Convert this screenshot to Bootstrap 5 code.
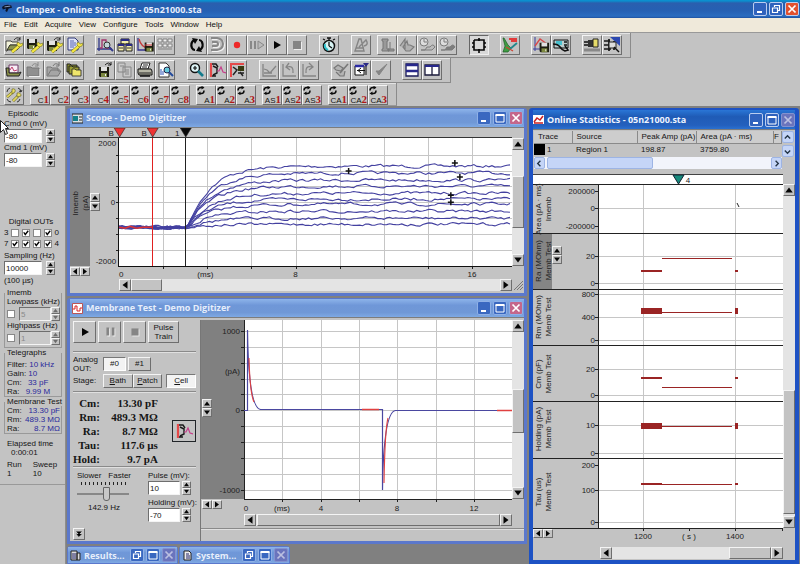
<!DOCTYPE html>
<html lang="en">
<head>
<meta charset="utf-8">
<meta name="viewport" content="width=device-width, initial-scale=1">
<title>Clampex - Online Statistics</title>
<link href="https://cdn.jsdelivr.net/npm/bootstrap@5.3.0/dist/css/bootstrap.min.css" rel="stylesheet">
<style>
:root{--face:#c3c3c3;--ui:"Liberation Sans",Arial,sans-serif;--cap:"Open Sans","Noto Sans",sans-serif}
body{font:8px/10px var(--ui);color:#151515;background:#808080;overflow-x:hidden}
button,input{font:inherit;color:inherit}
svg{display:block}
svg text{font-family:"Liberation Sans",Arial,sans-serif;font-size:8px;fill:#222}
.bevel{background:var(--face);border:1px solid;border-color:#f4f4f4 #6e6e6e #6e6e6e #f4f4f4;border-radius:0}
.sunk{border:1px solid;border-color:#6e6e6e #f4f4f4 #f4f4f4 #6e6e6e}
.btn{--bs-btn-padding-x:0;--bs-btn-padding-y:0;--bs-btn-font-size:8px;--bs-btn-line-height:10px;--bs-btn-border-radius:0;--bs-btn-color:#151515}
.app-title{height:18px;padding:0 1px 0 2px;font:700 9px/17px var(--cap);color:#e6eefc;background:linear-gradient(#0b93d2 0,#0b8ccc 1px,#2a5fae 3px,#2560b3 60%,#2a6cc0 90%,#1d50a0)}
.app-menu{height:15px;padding-left:4px;gap:7px;background:#efe9da;border-bottom:1px solid #999}
.app-menu a{font:8px/13px var(--ui);color:#111;text-decoration:none}
.bars{background:var(--face)}
.strip{height:25px;padding:2px 8px 3px 4px;border-bottom:1px solid #8b8b8b;border-right:1px solid #8b8b8b;box-shadow:inset 0 1px #e3e3e3}
.strip.last{height:23px;border-bottom-color:#999;padding-bottom:1px}
.tool{width:20px;height:20px;flex:none;padding:0}
.tool svg{width:18px;height:18px}
.tool.down{border-color:#666 #eee #eee #666;background:#d8d8d8}
.g12{margin-left:12px}.g11{margin-left:11px}.g6{margin-left:6px}
.cyc{display:flex;flex-direction:column;align-items:flex-start}
.cyc svg{width:8px;height:9px;flex:none}
.cyc span{align-self:flex-end;font:8px/8px var(--ui);height:8px;white-space:nowrap}
.cyc b{font:700 11px/8px "Liberation Serif",serif;color:#b01818}
.wb{gap:2px}
.wt{font:inherit}
.wbtn{width:14px;height:14px;padding:0;border:1px solid #b9cdf0;border-radius:2px;background:#2f62bd}
.wbtn svg{width:12px;height:12px}
.wbtn.x{background:#e2512f}
.soft .wbtn{border-color:#8fb0e6;background:#3a68c0}
.soft .wbtn.x{background:#c4668a}
.dim .wbtn.x{background:#6a74bd;border-color:#8392cf}
.dim .wbtn.x svg{opacity:.55}
.side{width:66px;background:var(--face);border-right:1px solid #8d8d8d;flex:none}
.side label{display:block;white-space:nowrap}
.side-in{padding:3px 3px 0 4px;border-bottom:1px solid #999}
.field{height:14px;border-radius:0;background:#fff;padding:0 1px;min-width:0;line-height:12px}
.field:disabled{background:#c9c9c9;color:#8a8a8a}
.w38{width:38px}.w33{width:32px}
.spin{width:9px;flex:none}
.spin button{display:block;width:9px;height:7px;padding:0}
.spin svg{width:7px;height:5px}
.off button svg{opacity:.45}
.form-check-input[type=checkbox]{width:8px;height:8px;margin:0;border-radius:0;border:1px solid #888;background-color:#fff;flex:none}
.form-check-input:checked[type=checkbox]{background-image:url("data:image/svg+xml,%3csvg xmlns='http://www.w3.org/2000/svg' viewBox='0 0 8 8'%3e%3cpath fill='none' stroke='black' stroke-width='1.8' d='M1 3l2 3 4-5'/%3e%3c/svg%3e")}
.outs{margin:50px 4px 0 0}
.bits{height:11px;padding-right:3px}
.samp{margin-top:2px}
.usec{margin:1px 0 2px}
.grp{border:1px solid #999;border-top:0;padding:0 1px 0 2px}
.grp legend{float:none;font-size:8px;line-height:9px;margin:0;display:flex;align-items:center;gap:1px;width:auto;white-space:nowrap}
.grp legend::after{content:"";height:1px;background:#999;flex:1}
.grp.filt{padding-bottom:2px}
.blue{color:#2a2a9c}
.rd{line-height:9px;white-space:nowrap}
.rd.first{padding-top:3px}
.ela{padding:5px 0 6px 3px;line-height:9px}
.runs{gap:11px;margin-top:3px}
.mdi{padding:2px 1px 1px 1px;gap:2px}
.stackcol{gap:2px}
.win{border:3px solid #5b78cc;border-top-width:1px;border-radius:3px 3px 0 0;background:var(--face)}
.cap{height:19px;padding:0 1px 0 2px;gap:3px;font:700 9px/18px var(--cap);color:#e6eefb;background:linear-gradient(#8db4ea,#6f97d8 35%,#7098d6 75%,#7ea9e4);border-bottom:1px solid #7c7c7c;white-space:nowrap}
.cap>svg{width:11px;height:11px}
.win.on{border:4px solid #1d52c4;border-top-width:2px}
.on>.cap{height:20px;padding:0;background:linear-gradient(#2a76d6,#1f5bb6 35%,#2460bd 80%,#2a70d0);color:#eef4ff}
.stats{width:270px;flex:none}
.vbar{width:12px;background:#e4e4e4;flex:none}
.hbar{height:12px;background:#e4e4e4}
.arr{width:12px;height:12px;flex:none;padding:0}
.arr svg{width:10px;height:8px}
.fan{position:absolute;z-index:2;display:flex}
.fan button{width:10px;height:9px;padding:0}
.fan svg{width:8px;height:7px}
#fa{left:20px;top:65px}#fb{left:0;top:139px}#fc{left:1px;top:79px}#fd{left:1px;top:180px}#fe{left:19px;top:72px}#ff{left:0;top:355px}
.vb1{margin:10px 0 13px}.hs1{margin-left:49px;height:14px}
.vb2{margin-bottom:15px}.hs2{margin:0 12px 2px 43px}
.vb3{margin:10px 0 14px}.hs3{margin:5px 12px 0 67px}
.mbody{padding-top:2px}
.mcol{border-left:1px solid #777}
.panel-l{width:130px;flex:none;padding:1px 4px 1px 3px}
.big{width:23px;height:22px}
.big.wide{width:31px}
.row-btns{gap:2px}
.rule{height:1px;background:#8a8a8a;box-shadow:0 1px #e0e0e0}
.m1{margin:8px 0 3px}.m3{margin-top:1px}.m4{margin:3px 0 4px}.m5{margin:0 0 4px}
.lab{width:30px;flex:none}.lh9{line-height:9px}
.tab{height:14px;flex:1}
.tab.fix{flex:none;width:23px;margin-right:2px}
.tab.sel{background:#f3f3f3;border-color:#777 #fff #fff #777}
.reads th,.reads td{font:700 11px/14px "Liberation Serif",serif;padding:0;text-align:right;white-space:nowrap}
.reads th{width:26px}.reads td{width:58px}
.mbig{width:24px;height:22px}
.slide{width:54px;margin-left:4px}
.pul{width:48px;white-space:nowrap}
.pair{gap:2px}
.hol{margin-top:3px}
.form-range{height:14px;width:52px;padding:0;margin:2px 0}
.form-range::-webkit-slider-runnable-track{height:2px;background:#888;border-radius:0}
.form-range::-webkit-slider-thumb{width:7px;height:14px;margin-top:-6px;border-radius:0 0 3px 3px;background:#c8c8c8;border:1px solid #666}
.ticks{height:3px;width:46px;margin:1px auto 0;background:repeating-linear-gradient(90deg,#222 0 1px,transparent 1px 4px)}
.mini-row{gap:1px}
.mini{width:111px;border-width:1px}
.mini .cap{height:16px;border-bottom:0;line-height:15px}
.top{padding:1px 1px 5px}
.grid{table-layout:fixed;margin:0}
.grid th,.grid td{font-weight:400;line-height:11px;height:12px;padding:0 3px 0 4px;white-space:nowrap;overflow:hidden}
.grid th{border-right:1px solid #8a8a8a;border-bottom:1px solid #8a8a8a;background:#cdcdcd}
.sw{display:inline-block;width:11px;height:11px;background:#000;vertical-align:top;margin-right:2px}
.xp{background:#c5d5f7;border:1px solid #9db4e4;border-radius:2px;padding:0;height:12px}
.xp svg{width:9px;height:9px}
.xph{background:#f2f4fb;height:12px;margin-top:2px}
.thumb{width:106px;margin-left:2px}
.xpv{width:12px;height:26px}
.cursor{position:absolute;z-index:3;left:0;top:120px}
.crisp{shape-rendering:crispEdges}
</style>
<script src="https://cdn.jsdelivr.net/npm/bootstrap@5.3.0/dist/js/bootstrap.bundle.min.js"></script>
</head>
<body class="d-flex flex-column min-vh-100">
<svg width="0" height="0" class="position-absolute" aria-hidden="true"><defs>
<g id="wrench"><path d="M7 16l7-6" stroke="#5c5a20" stroke-width="3.200"/><path d="M7 16l7-6" stroke="#f3e640" stroke-width="2.400"/><path d="M12 7q2-2 3 1l3-1q0 4-4 4-3-2-2-4z" fill="#f5e848" stroke="#5c5a20" stroke-width=".5"/></g>
<g id="flop"><path d="M0 0h10v10H1L0 9z" fill="#1d1d12"/><path d="M2 0h6v4H2z" fill="#e2e2e2"/><path d="M2 6h6v4H2z" fill="#7c8840"/><path d="M6 7h1v2H6z" fill="#eee"/></g>
<g id="graph"><path d="M2 2v12h12" fill="none" stroke="#34348f" stroke-width="1.300"/></g>
<symbol id="open" viewBox="0 0 18 18"><path d="M1 5h5l1 1h6v3H5l-3 6H1z" fill="#f3f3da" stroke="#222" stroke-width=".8"/><path d="M2 14l3-5h11l-4 5z" fill="#8c9450" stroke="#222" stroke-width=".8"/><path d="M9 4q3-4 6-1m0-2v3h-3" fill="none" stroke="#111" stroke-width=".8"/><use href="#wrench"/></symbol>
<symbol id="save" viewBox="0 0 18 18"><use href="#flop" x="2" y="3"/><use href="#wrench"/></symbol>
<symbol id="saveas" viewBox="0 0 18 18"><use href="#flop" x="2" y="5"/><path d="M9 4q3-4 6-1m0-2v3h-3" fill="none" stroke="#111" stroke-width=".8"/><use href="#wrench"/></symbol>
<symbol id="doc" viewBox="0 0 18 18"><path d="M3 2h7l3 3v9H3z" fill="#dfe3f6" stroke="#333a78"/><path d="M5 5h4M5 7h6M5 9h6M5 11h4" stroke="#5562b5"/><use href="#wrench"/></symbol>
<symbol id="peak" viewBox="0 0 18 18"><path d="M3 2v13M1 13h15" stroke="#333a8b" stroke-width="1.300"/><path d="M4 12h2V4h4v8h5" fill="none" stroke="#a3326b" stroke-width="1.300"/><circle cx="11" cy="9" r="3" fill="#c5d5da" stroke="#333"/><path d="M13 11l4 4" stroke="#333a8b" stroke-width="2"/></symbol>
<symbol id="tables" viewBox="0 0 18 18"><path d="M5 3h8v5H5zM2 8h6v7H2zM10 8h6v7h-6z" fill="#f3edaa" stroke="#202020"/><path d="M5 4h8M2 9h6M10 9h6" stroke="#2b2b84" stroke-width="2"/><path d="M3 12h4M11 12h4" stroke="#333"/></symbol>
<symbol id="fit" viewBox="0 0 18 18"><use href="#graph"/><path d="M3 3q2 8 9 9" fill="none" stroke="#c43a3a" stroke-width="1.300"/><use href="#flop" x="8" y="6" transform="translate(1.500 1) scale(.9)"/><path d="M9 9h7" stroke="#c33"/></symbol>
<symbol id="seqoff" viewBox="0 0 18 18"><path d="M2 3h4v3H2zM7 3h4v3H7zM12 3h4v3h-4zM2 8h4v3H2zM7 8h4v3H7zM12 8h4v3h-4zM2 13h14" fill="#eee" stroke="#858585"/></symbol>
<symbol id="loop" viewBox="0 0 18 18"><path d="M6 4q-4 3-2 8 1 2 3 2M12 14q4-3 2-8-1-2-3-2" fill="none" stroke="#080808" stroke-width="2.200"/><path d="M4 2l6 1-3 5zM14 16l-6-1 3-5z" fill="#080808"/></symbol>
<symbol id="again" viewBox="0 0 18 18"><path d="M4 3h6q6 1 6 6t-6 6H4M5 7h4q2 0 2 2t-2 2H5" fill="none" stroke="#f2f2f2" stroke-width="2"/><path d="M3 2h6q6 1 6 6t-6 6H3M4 6h4q2 0 2 2t-2 2H4" fill="none" stroke="#888" stroke-width="2"/></symbol>
<symbol id="rec" viewBox="0 0 18 18"><circle cx="9" cy="9" r="3.200" fill="#ed2828"/></symbol>
<symbol id="pplay" viewBox="0 0 18 18"><path d="M3 5v8M7 5v8" stroke="#888" stroke-width="2"/><path d="M10 5l6 4-6 4z" fill="#bbb" stroke="#888"/></symbol>
<symbol id="play" viewBox="0 0 18 18"><path d="M6 5l7 4-7 4z" fill="#050505"/></symbol>
<symbol id="stop" viewBox="0 0 18 18"><path d="M6 6h8v8H6z" fill="#eee"/><path d="M5 5h8v8H5z" fill="#858585"/></symbol>
<symbol id="pause" viewBox="0 0 18 18"><path d="M6 5h3v9H6zM12 5h3v9h-3z" fill="#eee"/><path d="M5 4h3v9H5zM11 4h3v9h-3z" fill="#858585"/></symbol>
<symbol id="clock" viewBox="0 0 18 18"><circle cx="9" cy="10" r="5.500" fill="#d8f4f4" stroke="#111" stroke-width="1.500"/><path d="M7 2h4M9 2v3M13 4l2-1M5 4L3 3M9 10V6M9 10l3 2" stroke="#111" stroke-width="1.300"/><path d="M5 8q-1 4 3 6" stroke="#2ec0cb" fill="none" stroke-width="2"/></symbol>
<symbol id="metro" viewBox="0 0 18 18"><path d="M7 3l-4 12h9L9 3zM4 12h8M7 11l7-7 1 2q1 3-3 4" fill="none" stroke="#858585" stroke-width="1.400"/></symbol>
<symbol id="glass" viewBox="0 0 18 18"><path d="M4 3h6v2H9v8h2v2H4v-2h1V5H4zM10 13h6v2h-6zM12 6v7" fill="#999" stroke="#777"/></symbol>
<symbol id="gate" viewBox="0 0 18 18"><path d="M2 10l5-7v10M5 11l4-6 1 4h2l4 2-4 4H8z" fill="#b0b0b0" stroke="#7c7c7c" stroke-width="1.200"/></symbol>
<symbol id="tclock" viewBox="0 0 18 18"><circle cx="6" cy="6" r="4" fill="#ddd" stroke="#7c7c7c"/><path d="M6 6V3M6 6h3M3 14h4l2-3h3q3-4 5 0l-3 3h-4z" fill="#bbb" stroke="#7c7c7c"/></symbol>
<symbol id="tclock2" viewBox="0 0 18 18"><circle cx="6" cy="6" r="4" fill="#ddd" stroke="#7c7c7c"/><path d="M6 6V3M6 6h3M3 14h4l2-3h3q3-4 5 0l-3 3h-4z" fill="#7d7d7d" stroke="#7c7c7c"/></symbol>
<symbol id="chip" viewBox="0 0 18 18"><path d="M4 4h10v3h2M14 11h2M14 11v3H4v-3H2M4 7H2M4 4v3M9 2v3M9 13v4M14 7v4M4 7v4" fill="none" stroke="#080808" stroke-width="1.600"/></symbol>
<symbol id="dye" viewBox="0 0 18 18"><path d="M2 2l2 8-2 6h5l3-4-3-3-4-7z" fill="#3f9c44" stroke="#1b5b22" stroke-width=".7"/><path d="M8 3h8M10 5h6" stroke="#e23b3b" stroke-width="1.800"/><path d="M9 13l7-6" stroke="#23888c" stroke-width="1.800"/><path d="M5 11l7 4" stroke="#c43" stroke-width="1.200"/></symbol>
<symbol id="gsave" viewBox="0 0 18 18"><path d="M3 1v14M1 13h15" stroke="#3a3f9c"/><path d="M3 10L8 3l7 5" fill="none" stroke="#d84747" stroke-width="1.300"/><use href="#flop" x="8" y="7" transform="scale(.95)"/></symbol>
<symbol id="scope" viewBox="0 0 18 18"><path d="M2 4h14v8H2z" fill="#bcc" stroke="#111"/><path d="M4 5h6v4H4z" fill="#48c0ce"/><path d="M12 6h3M12 9h3" stroke="#111" stroke-width="1.500"/><path d="M1 8q5 0 7 3t5 4l3-1-3-4" stroke="#111" fill="none" stroke-width="1.600"/></symbol>
<symbol id="plug" viewBox="0 0 18 18"><path d="M1 6h6M1 9h6" stroke="#111" stroke-width="1.600"/><path d="M5 4h6v7H5z" fill="#333"/><path d="M10 3h5v8h-5z" fill="#e5db69" stroke="#222"/><path d="M1 14h16" stroke="#888" stroke-width="3"/></symbol>
<symbol id="wires" viewBox="0 0 18 18"><path d="M7 1h10v9z" fill="#2c48b0"/><path d="M1 5h6M1 9h6M1 13h7M6 3v12M11 5v9" stroke="#161616" stroke-width="1.700"/><path d="M6 6h7v6H6z" fill="#ddd" stroke="#222"/><path d="M11 11l5 5" stroke="#111" stroke-width="1.400"/></symbol>
<symbol id="lopen" viewBox="0 0 18 18"><path d="M4 4h9v8H4z" fill="#f8eef6" stroke="#703a68"/><path d="M5 9l2-3 2 4 3-1" fill="none" stroke="#c23a6c"/><path d="M1 7h3v5h10l2-1-2 4H2z" fill="#8b904a" stroke="#222"/></symbol>
<symbol id="foff" viewBox="0 0 18 18"><path d="M2 6h4l1 1h7v8H2z" fill="#909090" stroke="#777"/><path d="M7 5q2-4 6-1m0-3v4h-3" fill="none" stroke="#888"/><path d="M4 15.500h11V8" stroke="#eee" fill="none"/></symbol>
<symbol id="foff2" viewBox="0 0 18 18"><path d="M2 6h4l1 1h6v3h3l-3 5H2z" fill="#a5a5a5" stroke="#777"/><path d="M3 14l3-5h9M8 5q2-4 6-1m0-3v4h-3" fill="none" stroke="#777"/></symbol>
<symbol id="stack" viewBox="0 0 18 18"><path d="M2 3h3l1 1h6v7H2z" fill="#898d2b" stroke="#222"/><path d="M4 5h3l1 1h6v7H4z" fill="#9b9e32" stroke="#222"/><path d="M7 8h3l1 1h5v6H7z" fill="#efe56a" stroke="#222" stroke-width=".8"/></symbol>
<symbol id="dsave" viewBox="0 0 18 18"><use href="#flop" x="3" y="6"/><path d="M9 4q4-4 6 0m0-3v3h-3" fill="none" stroke="#111" stroke-width=".9"/></symbol>
<symbol id="copyoff" viewBox="0 0 18 18"><path d="M2 2h7v9H2zM7 6h8v10H7z" fill="#c9c9c9" stroke="#858585"/><path d="M4 5h4M9 9h4M9 11h4M9 13h4" stroke="#858585"/></symbol>
<symbol id="print" viewBox="0 0 18 18"><path d="M6 2h8l-2 6H4z" fill="#fff" stroke="#222"/><path d="M2 8h13l1 2v4H3l-1-2z" fill="#b5b5a5" stroke="#111"/><path d="M3 12h12M7 4h5M6 6h5" stroke="#222"/><path d="M4 15h10" stroke="#111" stroke-width="1.500"/></symbol>
<symbol id="preview" viewBox="0 0 18 18"><path d="M3 2h7l3 3v11H3z" fill="#fff" stroke="#333"/><path d="M5 14v-6M7 14V10" stroke="#2b50b4"/><circle cx="11" cy="9" r="3" fill="#66cbdc" stroke="#224"/><path d="M13 11l4 4" stroke="#224a9c" stroke-width="2"/></symbol>
<symbol id="zoom" viewBox="0 0 18 18"><circle cx="7" cy="7" r="4.500" fill="#ddf4f6" stroke="#111" stroke-width="1.400"/><path d="M5 7h4M7 5v4" stroke="#111" stroke-width="1.200"/><path d="M10 10l5 5" stroke="#147b8c" stroke-width="2.600"/></symbol>
<symbol id="memb" viewBox="0 0 18 18"><path d="M3 2v14" stroke="#e54949" stroke-width="2.200"/><path d="M5 5l4 2v5l-4 2M4 3h4l2 3M4 15h4" fill="none" stroke="#1b1b1b" stroke-width="1.400"/><path d="M9 10h2l2-4 2 5 3 1" fill="none" stroke="#c63f8a" stroke-width="1.200"/></symbol>
<symbol id="memb2" viewBox="0 0 18 18"><path d="M3 2v14M4 3h12" stroke="#e54949" stroke-width="2"/><path d="M10 5h6v5h-6z" fill="#363b12"/><path d="M5 6l4 3-4 5M12 11l3 4M10 12h6" fill="none" stroke="#222" stroke-width="1.500"/></symbol>
<symbol id="axoff" viewBox="0 0 18 18"><path d="M3 3v12h13M4 8l3 1 3 3 6-7M4 12h8" fill="none" stroke="#858585" stroke-width="1.300"/></symbol>
<symbol id="undoff" viewBox="0 0 18 18"><path d="M3 3v12h13M13 12q1-8-6-6m2-4L6 6l4 3" fill="none" stroke="#858585" stroke-width="1.300"/></symbol>
<symbol id="redoff" viewBox="0 0 18 18"><path d="M3 3v12h13M6 12q-1-8 6-6M9 2l4 4-4 3" fill="none" stroke="#858585" stroke-width="1.300"/></symbol>
<symbol id="handoff" viewBox="0 0 18 18"><path d="M2 7l4-3 5 3-2 3-5-1zM4 11l4 4h4l1-5" fill="#b4b4b4" stroke="#777" stroke-width="1.200"/><path d="M8 12l8-9" stroke="#777" stroke-width="1.600"/></symbol>
<symbol id="split" viewBox="0 0 18 18"><path d="M3 5h9v9H3z" fill="#fff" stroke="#111"/><path d="M3 5h9" stroke="#2b2ba5" stroke-width="2.500"/><path d="M5 9.500h8M9 7l-3 2.500L9 12M14 4v10" fill="none" stroke="#111"/><path d="M11 2h6l-3 4z" fill="#2b2b86"/></symbol>
<symbol id="chkoff" viewBox="0 0 18 18"><path d="M4 10l3 4 8-11-8 7z" fill="#858585" stroke="#858585"/></symbol>
<symbol id="tileh" viewBox="0 0 18 18"><path d="M3 3h12v12H3z" fill="#fff" stroke="#1b1b5b" stroke-width="1.300"/><path d="M3 4h12M3 10h12" stroke="#28288c" stroke-width="2.400"/></symbol>
<symbol id="tilev" viewBox="0 0 18 18"><path d="M2 4h14v10H2zM9 4v10" fill="#fff" stroke="#1b1b3b" stroke-width="1.300"/><path d="M2 5h14" stroke="#28288c" stroke-width="2"/></symbol>
<symbol id="keys" viewBox="0 0 18 18"><path d="M2 11l6-5M8 15l5-5" stroke="#5a5720" stroke-width="2.800"/><path d="M2 11l6-5M8 15l5-5" stroke="#e0d65c" stroke-width="1.800"/><path d="M7 3q4-1 3 3l-3 2zM12 7q4-1 4 3l-4 1z" fill="#e8de60" stroke="#5a5720" stroke-width=".6"/><path d="M2 6q0-3 3-4M13 2q3 1 3 4m-2-1l2 1 1-2M15 13q-1 3-3 3M2 13q1 3 4 3" fill="none" stroke="#222" stroke-width=".9"/></symbol>
<symbol id="cy" viewBox="0 0 8 9"><path d="M6.500 1.500H4Q1 1.500 1 4.500M2 7.500h2.500q2.500 0 2.500-3" fill="none" stroke="#0c0c0c" stroke-width="1.500"/><path d="M4.500 0v3.500l3-2zM3.500 5.500V9l-3-1.500z" fill="#0c0c0c"/></symbol>
<symbol id="wmin" viewBox="0 0 12 12"><path d="M3 9h5" stroke="#fff" stroke-width="2"/></symbol>
<symbol id="wmax" viewBox="0 0 12 12"><path d="M2 3h8v7H2z" fill="none" stroke="#fff"/><path d="M1.500 3h9" stroke="#fff" stroke-width="2"/></symbol>
<symbol id="wres" viewBox="0 0 12 12"><path d="M4.500 4V2.500h5v5H8M2.500 5h5v4.500h-5z" fill="none" stroke="#fff" stroke-width="1.200"/></symbol>
<symbol id="wx" viewBox="0 0 12 12"><path d="M2.500 2.500l7 7M9.500 2.500l-7 7" stroke="#fff" stroke-width="1.700"/></symbol>
<symbol id="up" viewBox="0 0 8 6"><path d="M4 1l3 4H1z" fill="#050505"/></symbol>
<symbol id="dn" viewBox="0 0 8 6"><path d="M4 5l3-4H1z" fill="#050505"/></symbol>
<symbol id="lt" viewBox="0 0 8 6"><path d="M2 3l4-3v6z" fill="#050505"/></symbol>
<symbol id="rt" viewBox="0 0 8 6"><path d="M6 3L2 0v6z" fill="#050505"/></symbol>
</defs></svg>

<header class="app-title d-flex align-items-center">
<svg class="me-1" width="10" height="12" viewBox="0 0 12 13"><path d="M0 4q4-4 11-2l1 3-4 1-2 4-2-1 1-3-4 1z" fill="#0d1428"/><path d="M3 4l7-1" stroke="#9db4d8"/></svg>
<span class="me-auto text-nowrap">Clampex - Online Statistics - 05n21000.sta</span>
<span class="d-flex wb" data-k="wmin wres wx"></span>
</header>
<nav class="app-menu d-flex" aria-label="Main menu"><a href="#">File</a><a href="#">Edit</a><a href="#">Acquire</a><a href="#">View</a><a href="#">Configure</a><a href="#">Tools</a><a href="#">Window</a><a href="#">Help</a></nav>
<div class="bars d-flex flex-column align-items-start" id="bars"></div>

<div class="d-flex flex-grow-1">
<aside class="side"><div class="side-in">
  <div class="ps-1">Episodic</div>
  <label for="c0">Cmd 0 (mV)</label>
  <div class="d-flex gap-1"><input id="c0" class="field sunk w38" value="-80"><span class="spin"></span></div>
  <label for="c1">Cmd 1 (mV)</label>
  <div class="d-flex gap-1"><input id="c1" class="field sunk w38" value="-80"><span class="spin"></span></div>
  <div class="text-center outs">Digital OUTs</div>
  <div class="d-flex justify-content-between align-items-center bits"><span>3</span><input class="form-check-input" type="checkbox" aria-label="Out 3"><input class="form-check-input" type="checkbox" checked aria-label="Out 2"><input class="form-check-input" type="checkbox" aria-label="Out 1"><input class="form-check-input" type="checkbox" checked aria-label="Out 0"><span>0</span></div>
  <div class="d-flex justify-content-between align-items-center bits"><span>7</span><input class="form-check-input" type="checkbox" checked aria-label="Out 7"><input class="form-check-input" type="checkbox" checked aria-label="Out 6"><input class="form-check-input" type="checkbox" checked aria-label="Out 5"><input class="form-check-input" type="checkbox" checked aria-label="Out 4"><span>4</span></div>
  <label for="sa" class="samp">Sampling (Hz)</label>
  <div class="d-flex gap-1"><input id="sa" class="field sunk w38" value="10000"><span class="spin"></span></div>
  <div class="usec">(100 µs)</div>
  <fieldset class="grp filt"><legend>Imemb</legend>
    <label for="lp">Lowpass (kHz)</label>
    <div class="d-flex align-items-center"><input type="checkbox" class="form-check-input" aria-label="Use lowpass"><input id="lp" class="field sunk flex-fill w-25 ms-1" value="5" disabled><span class="spin off"></span></div>
    <label for="hp">Highpass (Hz)</label>
    <div class="d-flex align-items-center"><input type="checkbox" class="form-check-input" aria-label="Use highpass"><input id="hp" class="field sunk flex-fill w-25 ms-1" value="1" disabled><span class="spin off"></span></div></fieldset>
  <fieldset class="grp"><legend>Telegraphs</legend>
    <div class="rd first">Filter: <span class="blue">10 kHz</span></div><div class="rd">Gain: <span class="blue">10</span></div><div class="rd">Cm: <span class="blue ps-1">33 pF</span></div><div class="rd">Ra: <span class="blue ps-1">9.99 M</span></div></fieldset>
  <fieldset class="grp"><legend>Membrane Test</legend>
    <div class="rd d-flex justify-content-between">Cm: <span class="blue">13.30 pF</span></div><div class="rd d-flex justify-content-between">Rm: <span class="blue">489.3 MΩ</span></div><div class="rd d-flex justify-content-between">Ra: <span class="blue">8.7 MΩ</span></div></fieldset>
  <div class="ela"><div>Elapsed time</div><div class="ps-1">0:00:01</div><div class="d-flex runs"><span>Run<br>1</span><span>Sweep<br>10</span></div></div>
</div></aside>

<main class="mdi d-flex flex-grow-1">
<div class="d-flex flex-column flex-grow-1 stackcol">

<section class="win soft">
  <div class="cap d-flex align-items-center"><svg viewBox="0 0 11 11"><path d="M0 1h11v9H0z" fill="#d9e2e6" stroke="#222"/><path d="M1 3h5v5H1z" fill="#14808a"/><path d="M7 4h3M7 7h3" stroke="#222"/></svg><h1 class="me-auto mb-0 wt">Scope - Demo Digitizer</h1><span class="d-flex wb" data-k="wmin wmax wx"></span></div>
  <div class="d-flex position-relative">
    <svg id="scopePlot" class="flex-fill w-75" viewBox="0 0 441 151" role="img" aria-label="Scope traces"></svg>
    <div class="vbar d-flex flex-column vb1" data-v="26 52"></div>
    <span class="fan flex-column" data-f="up dn" id="fa"></span><span class="fan" data-f="lt rt" id="fb"></span>
  </div>
  <div class="d-flex hs1"><div class="hbar d-flex flex-fill" data-h="0 31"></div><svg width="12" height="12" viewBox="0 0 12 12"><path d="M2 11l9-9M5 11l6-6M8 11l3-3" stroke="#777"/></svg></div>
</section>

<section class="win soft">
  <div class="cap d-flex align-items-center"><svg viewBox="0 0 11 11"><path d="M.5.5h10v10H.5z" fill="#fff" stroke="#b55"/><path d="M1 6h2V3h2v5h3V5h2" fill="none" stroke="#d22"/></svg><h2 class="me-auto mb-0 wt">Membrane Test - Demo Digitizer</h2><span class="d-flex wb" data-k="wmin wmax wx"></span></div>
  <div class="d-flex mbody">
    <div class="panel-l d-flex flex-column">
      <div class="d-flex row-btns"><button class="btn bevel big" aria-label="Play"><svg class="m-auto" width="18" height="18"><use href="#play"/></svg></button><button class="btn bevel big" aria-label="Pause"><svg class="m-auto" width="16" height="16"><use href="#pause"/></svg></button><button class="btn bevel big" aria-label="Stop"><svg class="m-auto" width="16" height="16"><use href="#stop"/></svg></button><button class="btn bevel big wide lh9">Pulse<br>Train</button></div>
      <div class="rule m1"></div>
      <div class="d-flex align-items-center"><span class="lab lh9">Analog<br>OUT:</span><button class="btn bevel tab fix sel">#0</button><button class="btn bevel tab fix">#1</button></div>
      <div class="d-flex align-items-center m3"><span class="lab">Stage:</span><button class="btn bevel tab"><u>B</u>ath</button><button class="btn bevel tab"><u>P</u>atch</button><button class="btn bevel tab sel ms-1"><u>C</u>ell</button></div>
      <div class="rule m4"></div>
      <div class="d-flex align-items-center justify-content-between">
        <table class="reads"><tbody><tr><th>Cm:</th><td>13.30 pF</td></tr><tr><th>Rm:</th><td>489.3 MΩ</td></tr><tr><th>Ra:</th><td>8.7 MΩ</td></tr><tr><th>Tau:</th><td>117.6 µs</td></tr><tr><th>Hold:</th><td>9.7 pA</td></tr></tbody></table>
        <button class="bevel border-dark p-0 mbig" aria-label="Membrane test"><svg class="m-auto" width="18" height="18"><use href="#memb"/></svg></button>
      </div>
      <div class="rule m5"></div>
      <div class="d-flex justify-content-between">
        <div class="slide"><div class="d-flex justify-content-between"><span>Slower</span><span>Faster</span></div><div class="ticks"></div><input type="range" class="form-range d-block" value="58" aria-label="Rate"><div class="text-center">142.9 Hz</div></div>
        <div class="pul"><label for="pu" class="d-block">Pulse (mV):</label><div class="d-flex pair"><input id="pu" class="field sunk w33" value="10"><span class="spin"></span></div><label for="ho" class="d-block hol">Holding (mV):</label><div class="d-flex pair"><input id="ho" class="field sunk w33" value="-70"><span class="spin"></span></div></div>
      </div>
      <button class="bevel arr mt-auto" aria-label="More"><svg viewBox="0 0 10 10"><path d="M2 2l3 3 3-3M2 5l3 3 3-3" fill="#000" stroke="#111"/></svg></button>
    </div>
    <div class="flex-fill mcol">
      <div class="d-flex position-relative">
        <svg id="membPlot" class="flex-fill w-75" viewBox="0 0 311 194" role="img" aria-label="Membrane test current"></svg>
        <div class="vbar d-flex flex-column vb2" data-v="57 44"></div>
        <span class="fan flex-column" data-f="up dn" id="fc"></span><span class="fan" data-f="lt rt" id="fd"></span>
      </div>
      <div class="hbar d-flex hs2" data-h="1 243"></div>
      <div class="rule mb-2"></div>
      <div class="pb-1"></div>
    </div>
  </div>
</section>

<div class="d-flex mini-row">
  <section class="win soft dim mini"><div class="cap d-flex align-items-center"><svg viewBox="0 0 11 11"><path d="M1 1h6v9H1zM7 3h3v7H7z" fill="#ddd" stroke="#222"/><path d="M3 3v6M5 3v6" stroke="#226"/></svg><h2 class="me-auto mb-0 wt">Results...</h2><span class="d-flex wb" data-k="wres wmax wx"></span></div></section>
  <section class="win soft dim mini"><div class="cap d-flex align-items-center"><svg viewBox="0 0 11 11"><path d="M2 1h5l2 2v7H2z" fill="#eee" stroke="#222"/><path d="M4 4h3M4 6h4M4 8h4" stroke="#226"/></svg><h2 class="me-auto mb-0 wt">System...</h2><span class="d-flex wb" data-k="wres wmax wx"></span></div></section>
</div>
</div>

<section class="win on dim stats d-flex flex-column">
  <div class="cap d-flex align-items-center"><svg viewBox="0 0 11 11"><path d="M0 1h11v9H0z" fill="#fff"/><path d="M1 8l3-4 3 2 3-4M1 9h9" fill="none" stroke="#c22" stroke-width="1.500"/></svg><h2 class="me-auto mb-0 wt">Online Statistics - 05n21000.sta</h2><span class="d-flex wb" data-k="wmin wmax wx"></span></div>
  <div class="top d-flex">
    <div class="flex-fill w-75">
      <table class="grid w-100"><colgroup><col style="width:38px"><col style="width:65px"><col style="width:59px"><col><col style="width:8px"></colgroup>
      <thead><tr><th>Trace</th><th>Source</th><th class="pe-0">Peak Amp (pA)</th><th class="pe-0">Area (pA · ms)</th><th class="p-0">F</th></tr></thead>
      <tbody><tr><td class="ps-0"><span class="sw"></span>1</td><td>Region 1</td><td>198.87</td><td>3759.80</td><td></td></tr></tbody></table>
      <div class="d-flex xph"><button class="xp" aria-label="Scroll left"><svg viewBox="0 0 10 10"><path d="M6 2L3 5l3 3" fill="none" stroke="#234" stroke-width="1.500"/></svg></button><div class="xp thumb"></div><span class="flex-fill"></span><button class="xp" aria-label="Scroll right"><svg viewBox="0 0 10 10"><path d="M4 2l3 3-3 3" fill="none" stroke="#234" stroke-width="1.500"/></svg></button></div>
    </div>
    <div class="d-flex flex-column xpv"><button class="xp" aria-label="Scroll up"><svg viewBox="0 0 10 10"><path d="M2 6l3-3 3 3" fill="none" stroke="#234" stroke-width="1.500"/></svg></button><button class="xp mt-auto" aria-label="Scroll down"><svg viewBox="0 0 10 10"><path d="M2 4l3 3 3-3" fill="none" stroke="#234" stroke-width="1.500"/></svg></button></div>
  </div>
  <div class="d-flex position-relative">
    <svg id="statPlot" class="flex-fill w-75" viewBox="0 0 250 368" role="img" aria-label="Online statistics"></svg>
    <div class="vbar d-flex flex-column vb3" data-v="194 124"></div>
    <span class="fan flex-column" data-f="up dn" id="fe"></span><span class="fan" data-f="lt rt" id="ff"></span>
  </div>
  <div class="hbar d-flex hs3" data-h="117 42"></div>
</section>
</main>
</div>
<svg class="cursor" width="9" height="16" viewBox="0 0 9 16" aria-hidden="true"><path d="M.5.5v12l3-3 2 5 2-1-2-5h3z" fill="#fff" stroke="#222"/></svg>

<script>
const $=s=>document.querySelector(s),$$=s=>document.querySelectorAll(s);
const names={up:'Up',dn:'Down',lt:'Left',rt:'Right',wmin:'Minimize',wmax:'Maximize',wres:'Restore',wx:'Close'};
/* toolbars: groups of [gap class, icons] */
const T=[
 [['','open save saveas doc'],['g11','peak tables fit seqoff'],['g12','loop again rec pplay play stop'],['g12','clock'],['g12','metro'],['g6','glass gate tclock tclock2'],['g12','chip'],['g11','dye'],['g11','gsave scope'],['g11','plug wires']],
 [['','lopen foff foff2 stack'],['g11','dsave copyoff print preview'],['g12','zoom memb memb2'],['g12','axoff undoff redoff'],['g12','handoff split chkoff'],['g11','tileh tilev']],
 [['','keys'],['g6','C1 C2 C3 C4 C5 C6 C7 C8'],['g6','A1 A2 A3'],['g6','AS1 AS2 AS3'],['g6','CA1 CA2 CA3']]];
$('#bars').innerHTML=T.map((r,i)=>`<div class="strip d-flex ${i==2?'last':''}" role="toolbar">`+r.map(([g,l])=>`<div class="d-flex ${g}">`+l.split(' ').map(n=>/\d$/.test(n)&&n==n.toUpperCase()
 ?`<button class="tool bevel cyc"><svg><use href="#cy"/></svg><span>${n.slice(0,-1)}<b>${n.slice(-1)}</b></span></button>`
 :`<button class="tool bevel ${n=='chip'?'down':''}" aria-label="${n}"><svg><use href="#${n}"/></svg></button>`).join('')+'</div>').join('')+'</div>').join('');
const ab=(k,c)=>`<button class="bevel ${c}" aria-label="${names[k]}"><svg><use href="#${k}"/></svg></button>`;
$$('.spin').forEach(e=>e.innerHTML=ab('up','')+ab('dn',''));
$$('.fan').forEach(e=>e.innerHTML=e.dataset.f.split(' ').map(k=>ab(k,'')).join(''));
$$('.wb').forEach(e=>e.innerHTML=e.dataset.k.split(' ').map(k=>`<button class="wbtn ${k=='wx'?'x':''}" aria-label="${names[k]}"><svg><use href="#${k}"/></svg></button>`).join(''));
/* scroll bars: space before the thumb, thumb length */
$$('[data-v]').forEach(e=>{const[a,b]=e.dataset.v.split(' ');e.innerHTML=ab('up','arr')+`<div style="height:${a}px"></div><div class="bevel" style="height:${b}px"></div>`+ab('dn','arr mt-auto')});
$$('[data-h]').forEach(e=>{const[a,b]=e.dataset.h.split(' ');e.innerHTML=ab('lt','arr')+`<div style="width:${a}px"></div><div class="bevel" style="width:${b}px"></div>`+ab('rt','arr ms-auto')});

const R=(x,y,w,h,f)=>`<rect class="crisp" x="${x}" y="${y}" width="${w}" height="${h}" fill="${f}"/>`;
const L=(x1,y1,x2,y2,c)=>x1==x2?R(x1,y1,1,y2-y1,c):R(x1,y1,x2-x1,1,c);
const X=(x,y,t,a='middle',o='')=>`<text x="${x}" y="${y}" text-anchor="${a}" ${o}>${t}</text>`;
let seed=7;const rnd=()=>(seed=(seed*16807)%2147483647)/2147483647-.5;
const G='#c6c6c6';

/* scope */
let s=R(0,0,441,151,'#c3c3c3')+R(0,10,20,128,'#808080')+R(49,10,392,128,'#fff');
for(let i=1;i<9;i++)s+=L(49+44*i,10,49+44*i,138,G)+L(49+44*i,138,49+44*i,141,'#222');
for(const y of[27,43,58,74,90,106,122])s+=L(49,y,441,y,G)+L(46,y,49,y,'#222');
[38,45,52,58,65,71,76,83,90,96].forEach(p=>{let d='',n=0;for(let x=49;x<=441;x+=3){n=n*.55+rnd()*2.6;const r=x<117?0:1-Math.exp(-(x-117)/23);d+=(d?'L':'M')+x+' '+(99+(p-99)*r+n).toFixed(1)}
 s+=`<path d="${d}" fill="none" stroke="#4340a0" stroke-width="1.100"/>`});
s+=`<path d="M49 99l6 1 5-2 6 2 7-1 9 0" fill="none" stroke="#d33" stroke-width="1.500"/>`;
s+=L(48,10,48,139,'#111')+L(0,9,441,9,'#333')+L(48,138,441,138,'#111')+L(82,10,82,138,'#e02020')+L(115,10,115,138,'#222');
[[49,'#e33','B'],[82,'#e33','B'],[115,'#080808','1']].forEach(([x,c,t])=>s+=`<path d="M${x-5} 0h11l-5.500 9z" fill="${c}" stroke="#222" stroke-width=".6"/>`+X(x-8,8,t));
[[278,43],[384,35],[389,49],[380,67],[380,74]].forEach(([x,y])=>s+=`<path d="M${x-3} ${y}h6M${x} ${y-3}v6" stroke="#111" stroke-width="1.500"/>`);
s+=X(46,18,'2000','end')+X(45,77,'0','end')+X(46,136,'-2000','end')+X(51,149,'0')+X(135,149,'(ms)')+X(225,149,'8')+X(401,149,'16')+X(0,0,'Imemb','middle','transform="translate(8 75) rotate(-90)"')+X(0,0,'(pA)','middle','transform="translate(18 75) rotate(-90)"');
$('#scopePlot').innerHTML=s;

/* membrane test */
s=R(0,0,311,194,'#c3c3c3')+R(0,0,43,179,'#808080')+R(43,0,268,179,'#fff');
for(let i=1;i<7;i++){const x=Math.round(43+38.3*i);s+=L(x,0,x,179,G)+L(x,179,x,182,'#222')}
for(let i=0;i<11;i++){const y=Math.round(11+15.85*i);s+=L(43,y,311,y,G)+L(40,y,43,y,'#222')}
s+=L(43,0,43,180,'#222')+L(43,179,311,179,'#222');
s+=`<path d="M43 90.500h3.500V10q1 78 13 79.500H181.500V170q1-78 13-79.500H311" fill="none" stroke="#4a47a0" stroke-width="1.200"/><path d="M48 38q1 36 5 44M183 163q1-54 4-65" fill="none" stroke="#e04040" stroke-width="1.100"/><path d="M161 89.500h17M296 90.500h15" stroke="#e04040" stroke-width="1.300"/>`;
s+=X(39,14,'1000','end')+X(39,54,'(pA)','end')+X(39,93,'0','end')+X(39,173,'-1000','end')+X(45,191,'0')+X(81,191,'(ms)')+X(120,191,'4')+X(196,191,'8')+X(273,191,'12');
$('#membPlot').innerHTML=s;

/* online statistics */
s=R(0,0,250,368,'#c3c3c3')+R(0,0,250,10,'#fff')+R(66,10,184,344,'#fff')+R(0,60,19,55,'#858585')+L(110,10,110,354,G)+L(202,10,202,354,G);
const P=[[10,[[17,'200000'],[34,'0'],[52,'-200000']],'Area (pA · ms)','Imemb',35],[59,[[82,'20'],[109,'0']],'Ra (MOhm)','Memb Test',87],[115,[[120,'800'],[143,'400'],[166,'0']],'Rm (MOhm)','Memb Test',143],[171,[[195,'20'],[221,'0']],'Cm (pF)','Memb Test',200],[227,[[251,'10'],[279,'0']],'Holding (pA)','Memb Test',255],[284,[[291,'200'],[316,'100'],[348,'0']],'Tau (us)','Memb Test',318]];
P.forEach(([y,t,a,b,c])=>{t.forEach(([v,l])=>{if(l!='200'&&!/200000/.test(l))s+=L(66,v,250,v,G);s+=L(62,v,66,v,'#222')+X(62,v+3,l,'end')});
 s+=X(0,0,a,'middle',`transform="translate(8 ${c}) rotate(-90)"`)+X(0,0,b,'middle',`transform="translate(18 ${c}) rotate(-90)"`)+L(0,y,250,y,'#222')});
s+=L(65,10,65,354,'#222')+L(0,354,250,354,'#222')+L(0,0,250,0,'#444');
for(const x of[110,156,202,249])s+=L(x,354,x,357,'#222');
const D='#9a2424';
[[96,2,84],[134,6,138],[203,2,213],[249,6,252],[309,2,310]].forEach(([y,h,l])=>{s+=R(108,y,21,h,D)+R(129,l,70,1,D)+R(202,y,3,h,D)});
s+=`<path d="M204 29l2 4" stroke="#222"/><path d="M140 1h11l-5.500 9z" fill="#168a7c" stroke="#123"/>`+X(155,9,'4')+X(110,365,'1200')+X(156,365,'( s )')+X(202,365,'1400');
$('#statPlot').innerHTML=s;
</script>
</body>
</html>
